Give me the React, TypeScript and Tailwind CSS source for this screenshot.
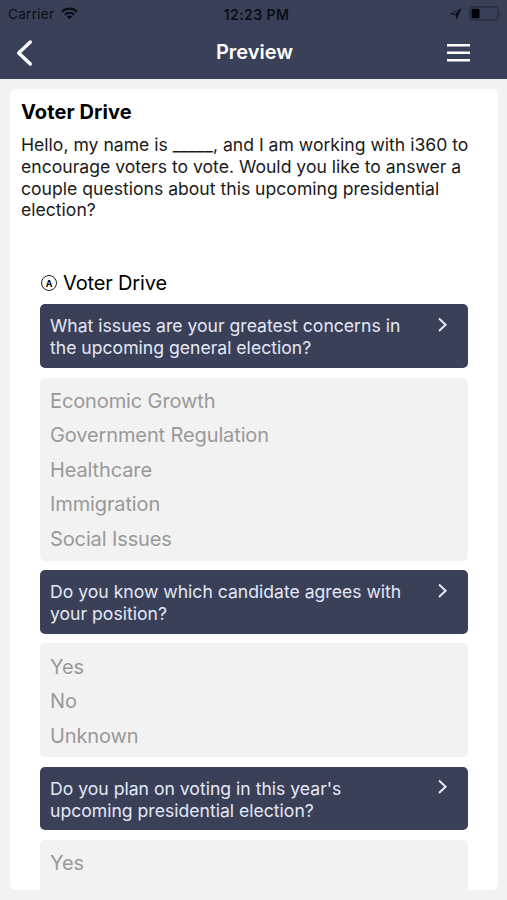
import { useState } from 'react';

const questions = [
  {
    lines: ['What issues are your greatest concerns in', 'the upcoming general election?'],
    answers: ['Economic Growth', 'Government Regulation', 'Healthcare', 'Immigration', 'Social Issues'],
  },
  {
    lines: ['Do you know which candidate agrees with', 'your position?'],
    answers: ['Yes', 'No', 'Unknown'],
  },
  {
    lines: ["Do you plan on voting in this year's", 'upcoming presidential election?'],
    answers: ['Yes', 'No', 'Unknown'],
  },
];

const intro = [
  'Hello, my name is _____, and I am working with i360 to',
  'encourage voters to vote. Would you like to answer a',
  'couple questions about this upcoming presidential',
  'election?',
];

function StatusBar() {
  return (
    <div className="grid h-[27px] grid-cols-3 items-center pl-2 pr-[6px] text-[13.5px] text-[#0b0d16]">
      <div className="flex items-center gap-[7px]">
        <span className="pt-px tracking-[0.3px]">Carrier</span>
        <svg className="h-[13px] w-[17px]" viewBox="0 0 18 13" fill="none" stroke="currentColor" strokeWidth="2.4">
          <path d="M1 4.7C5.6.3 12.4.3 17 4.7" />
          <path d="M4 7.8c2.9-2.7 7.1-2.7 10 0" />
          <path d="M9 12.7 6 9.8c1.7-1.5 4.3-1.5 6 0z" fill="currentColor" stroke="none" />
        </svg>
      </div>
      <span className="whitespace-nowrap pl-[4px] pt-px text-center text-[14px] font-semibold tracking-[0.4px]">12:23 PM</span>
      <div className="flex items-center justify-end gap-[7px]">
        <svg className="h-3 w-3" viewBox="0 0 12 12" fill="none">
          <path d="M11.3.8.6 5.9l4.6.6z" stroke="currentColor" strokeWidth=".8" strokeLinejoin="round" />
          <path d="M11.3.8 5.2 6.5l1.5 4.9z" fill="currentColor" />
        </svg>
        <svg className="h-[15px] w-8" viewBox="0 0 32 15" fill="none">
          <rect x=".8" y=".9" width="28" height="13" rx="3" stroke="#252a3c" strokeWidth="1.1" />
          <rect x="2.5" y="2.7" width="8" height="9.5" rx="1" fill="#020307" />
          <path d="M30.3 5.3c1.3.6 1.3 3.8 0 4.4z" fill="#252a3c" />
        </svg>
      </div>
    </div>
  );
}

function Question({ lines, answers }: { lines: string[]; answers: string[] }) {
  const [open, setOpen] = useState(true);

  return (
    <>
      <button
        onClick={() => setOpen(!open)}
        className="flex h-[63.3px] w-full shrink-0 items-start justify-between rounded-[5px] bg-[#3a4058] pl-[10px] pr-5 pt-[11px] text-left text-[#e4e8f7]"
      >
        <span className="text-[17.6px] leading-[21.6px]">
          {lines.map((line) => (
            <span key={line} className="block whitespace-nowrap">{line}</span>
          ))}
        </span>
        <svg className="mt-[1.5px] h-4 w-[11px]" viewBox="0 0 11 16" fill="none" stroke="currentColor" strokeWidth="2">
          <path d="m2 1.5 6.6 6.2L2 14" />
        </svg>
      </button>
      {open && (
        <ul className="shrink-0 rounded-[5px] bg-[#f2f2f2] pb-[4.2px] pl-[10px] pt-[5.8px] text-[20px] tracking-[-0.12px] text-[#999]">
          {answers.map((answer) => (
            <li key={answer} className="flex h-[34.6px] items-center">{answer}</li>
          ))}
        </ul>
      )}
    </>
  );
}

export default function App() {
  return (
    <div className="flex h-[900px] w-[507px] flex-col overflow-hidden bg-[#f2f2f2] font-['Inter',sans-serif] text-black">
      <header className="h-[79px] shrink-0 bg-[#3a4058]">
        <StatusBar />
        <div className="flex h-[51px] items-center justify-between pl-4 pr-[37px] text-white">
          <button aria-label="Back" className="w-[23px]">
            <svg className="h-7 w-[17px]" viewBox="0 0 17 28" fill="none" stroke="currentColor" strokeWidth="3.4" strokeLinecap="round" strokeLinejoin="round">
              <path d="M14.3 3 2.7 14l11.6 11" />
            </svg>
          </button>
          <h1 className="pb-[2px] pl-[23px] text-[20px] font-semibold">Preview</h1>
          <button aria-label="Menu">
            <svg className="h-5 w-[23px]" viewBox="0 0 23 20" stroke="currentColor" strokeWidth="2.6">
              <path d="M0 2.3h23M0 9.8h23M0 17.3h23" />
            </svg>
          </button>
        </div>
      </header>

      <main className="m-[10px] mr-[9.5px] flex min-h-0 flex-1 flex-col overflow-hidden rounded-[6px] bg-white">
        <h2 className="mt-[10px] pl-[11px] text-[20px] font-bold leading-[26px] tracking-[0.1px]">Voter Drive</h2>
        <p className="mt-[9px] pl-[11px] text-[17.6px] leading-[21.8px] text-[#1a1a1a]">
          {intro.map((line) => (
            <span key={line} className="block whitespace-nowrap">{line}</span>
          ))}
        </p>
        <div className="mt-[49.3px] flex h-[26px] shrink-0 items-center gap-[6px] pl-[31px]">
          <span className="flex size-4 items-center justify-center rounded-full border-[1.3px] border-[#222] text-[9px] font-bold">A</span>
          <span className="text-[20px] tracking-[-0.15px]">Voter Drive</span>
        </div>
        <div className="mt-[8px] flex min-h-0 flex-col gap-[9.8px] pl-[30px] pr-[29.5px]">
          {questions.map((question) => (
            <Question key={question.lines[0]} {...question} />
          ))}
        </div>
      </main>
    </div>
  );
}
